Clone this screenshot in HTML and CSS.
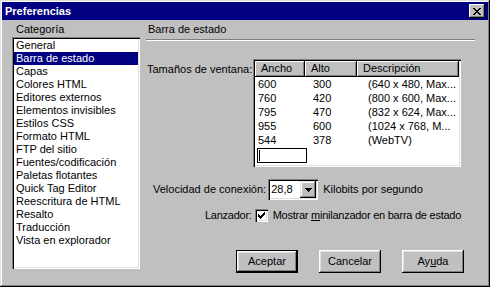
FILE: index.html
```html
<!DOCTYPE html>
<html lang="es">
<head>
  <meta charset="utf-8">
  <title>Preferencias</title>
  <link rel="stylesheet" href="styles.css">
</head>
<body>

<div class="win">
  <div class="titlebar">
    <span>Preferencias</span>
    <span class="close">
      <svg width="8" height="7" viewBox="0 0 8 7"><path d="M0 0h2v1H0zM6 0h2v1H6zM1 1h2v1H1zM5 1h2v1H5zM2 2h4v1H2zM3 3h2v1H3zM2 4h4v1H2zM1 5h2v1H1zM5 5h2v1H5zM0 6h2v1H0zM6 6h2v1H6z" fill="#000"/></svg>
    </span>
  </div>

  <div class="client">
    <div class="cat">
      <div class="lbl">Categoría</div>
      <ul class="list">
        <li>General</li>
        <li class="sel">Barra de estado</li>
        <li>Capas</li>
        <li>Colores HTML</li>
        <li>Editores externos</li>
        <li>Elementos invisibles</li>
        <li>Estilos CSS</li>
        <li>Formato HTML</li>
        <li>FTP del sitio</li>
        <li>Fuentes/codificación</li>
        <li>Paletas flotantes</li>
        <li>Quick Tag Editor</li>
        <li>Reescritura de HTML</li>
        <li>Resalto</li>
        <li>Traducción</li>
        <li>Vista en explorador</li>
      </ul>
    </div>

    <div class="pane">
      <div class="head">Barra de estado</div>
      <div class="rule"></div>

      <div class="sizes">
        <div class="lbl">Tamaños de ventana:</div>
        <div class="table">
          <div class="thead">
            <div class="th">Ancho</div>
            <div class="th">Alto</div>
            <div class="th">Descripción</div>
          </div>
          <div class="tr"><span>600</span><span>300</span><span>(640 x 480, Max...</span></div>
          <div class="tr"><span>760</span><span>420</span><span>(800 x 600, Max...</span></div>
          <div class="tr"><span>795</span><span>470</span><span>(832 x 624, Max...</span></div>
          <div class="tr"><span>955</span><span>600</span><span>(1024 x 768, M...</span></div>
          <div class="tr"><span>544</span><span>378</span><span>(WebTV)</span></div>
          <div class="edit"><i class="caret"></i></div>
        </div>
      </div>

      <div class="speed">
        <span>Velocidad de conexión:</span>
        <div class="combo">
          <span class="val">28,8</span>
          <span class="drop">
            <svg width="7" height="4" viewBox="0 0 7 4"><path d="M0 0h7v1H0zM1 1h5v1H1zM2 2h3v1H2zM3 3h1v1H3z" fill="#000"/></svg>
          </span>
        </div>
        <span>Kilobits por segundo</span>
      </div>

      <div class="launcher">
        <span>Lanzador:</span>
        <span class="check">
          <svg width="7" height="7" viewBox="0 0 7 7"><path d="M6 0h1v1H6zM5 1h2v1H5zM0 2h1v1H0zM4 2h3v1H4zM0 3h2v1H0zM3 3h3v1H3zM0 4h5v1H0zM1 5h3v1H1zM2 6h1v1H2z" fill="#000"/></svg>
        </span>
        <span>Mostrar <u>m</u>inilanzador en barra de estado</span>
      </div>

      <div class="buttons">
        <button class="btn default">Aceptar</button>
        <button class="btn">Cancelar</button>
        <button class="btn">Ay<u>u</u>da</button>
      </div>
    </div>
  </div>
</div>

</body>
</html>
```

FILE: styles.css
```css
:root { --face:#c0c0c0; --shadow:#808080; --light:#dfdfdf; --navy:#000080; }
body{margin:0;background:var(--face);color:#000;
     font:11px/13px "Liberation Sans",Arial,sans-serif}

/* ------- window frame ------- */
.win{width:490px;height:287px;box-sizing:border-box;padding:2px;background:var(--face);
     box-shadow:inset -1px -1px #000,inset 1px 1px var(--light),
                inset -2px -2px var(--shadow),inset 2px 2px #fff}
.titlebar{height:18px;background:var(--navy);color:#fff;font-weight:700;
          display:flex;align-items:center;justify-content:space-between;padding:0 3px 0 3px}
.close{width:16px;height:14px;box-sizing:border-box;background:var(--face);
       display:flex;align-items:center;justify-content:center;
       box-shadow:inset -1px -1px #000,inset 1px 1px #fff,inset -2px -2px var(--shadow)}

.client{display:flex;gap:6px;padding:3px 12px 0 10px}

/* ------- category list ------- */
.cat{width:128px}
.cat .lbl{padding-left:4px}
.list{list-style:none;margin:1px 0 0;padding:2px 0;height:232px;box-sizing:border-box;background:#fff;
      box-shadow:inset 1px 1px var(--shadow),inset 2px 2px #000,
                 inset -1px -1px #fff,inset -2px -2px var(--light)}
.list li{margin:0 2px;padding-left:2px;height:13px;white-space:nowrap}
.list .sel{background:var(--navy);color:#fff}

/* ------- right pane ------- */
.pane{flex:1}
.head{padding-left:2px}
.rule{margin:3px 1px 0 0;border-top:1px solid var(--shadow);border-bottom:1px solid #fff}

.sizes{display:flex;align-items:flex-start;margin-top:18px}
.sizes .lbl{width:106px;padding-left:1px;margin-top:4px;white-space:nowrap}
.table{width:208px;height:108px;box-sizing:border-box;padding:2px;background:#fff;
       box-shadow:inset 1px 1px var(--shadow),inset 2px 2px #000,
                  inset -1px -1px #fff,inset -2px -2px var(--light)}
.thead,.tr{display:grid;grid-template-columns:50px 52px 102px}
.th{height:16px;box-sizing:border-box;padding-left:6px;line-height:15px;background:var(--face);
    box-shadow:inset -1px -1px #000,inset 1px 1px #fff,inset -2px -2px var(--shadow)}
.tr{height:14px;line-height:14px;white-space:nowrap}
.tr span:nth-child(1){padding-left:3px}
.tr span:nth-child(2){padding-left:8px}
.tr span:nth-child(3){padding-left:11px}
.edit{width:50px;height:15px;box-sizing:border-box;margin:1px 0 0 2px;border:1px solid #000;
      display:flex;align-items:center;padding-left:1px}
.caret{width:1px;height:11px;background:#000}

.speed{display:flex;align-items:center;gap:2px;margin-top:12px;padding-left:7px;height:21px}
.combo{width:50px;height:21px;box-sizing:border-box;padding:2px;display:flex;background:#fff;
       box-shadow:inset 1px 1px var(--shadow),inset 2px 2px #000,
                  inset -1px -1px #fff,inset -2px -2px var(--light)}
.combo .val{flex:1;padding-left:1px;line-height:17px}
.drop{width:16px;height:17px;box-sizing:border-box;background:var(--face);
      display:flex;align-items:center;justify-content:center;
      box-shadow:inset -1px -1px #000,inset 1px 1px var(--light),
                 inset -2px -2px var(--shadow),inset 2px 2px #fff}
.speed > span:last-child{margin-left:3px}

.launcher{display:flex;align-items:center;height:13px;margin-top:9px;padding-left:59px;
          letter-spacing:-.25px}
.check{width:13px;height:13px;box-sizing:border-box;margin:0 5px 0 3px;background:#fff;
       display:flex;align-items:center;justify-content:center;
       box-shadow:inset 1px 1px var(--shadow),inset 2px 2px #000,
                  inset -1px -1px #fff,inset -2px -2px var(--light)}

.buttons{display:flex;justify-content:flex-end;gap:21px;margin-top:28px;padding-right:12px}
.btn{width:62px;height:23px;box-sizing:border-box;padding:0;border:none;background:var(--face);
     font:inherit;color:#000;
     box-shadow:inset -1px -1px #000,inset 1px 1px #fff,
                inset -2px -2px var(--shadow),inset 2px 2px var(--light)}
.btn.default{border:1px solid #000}
```
